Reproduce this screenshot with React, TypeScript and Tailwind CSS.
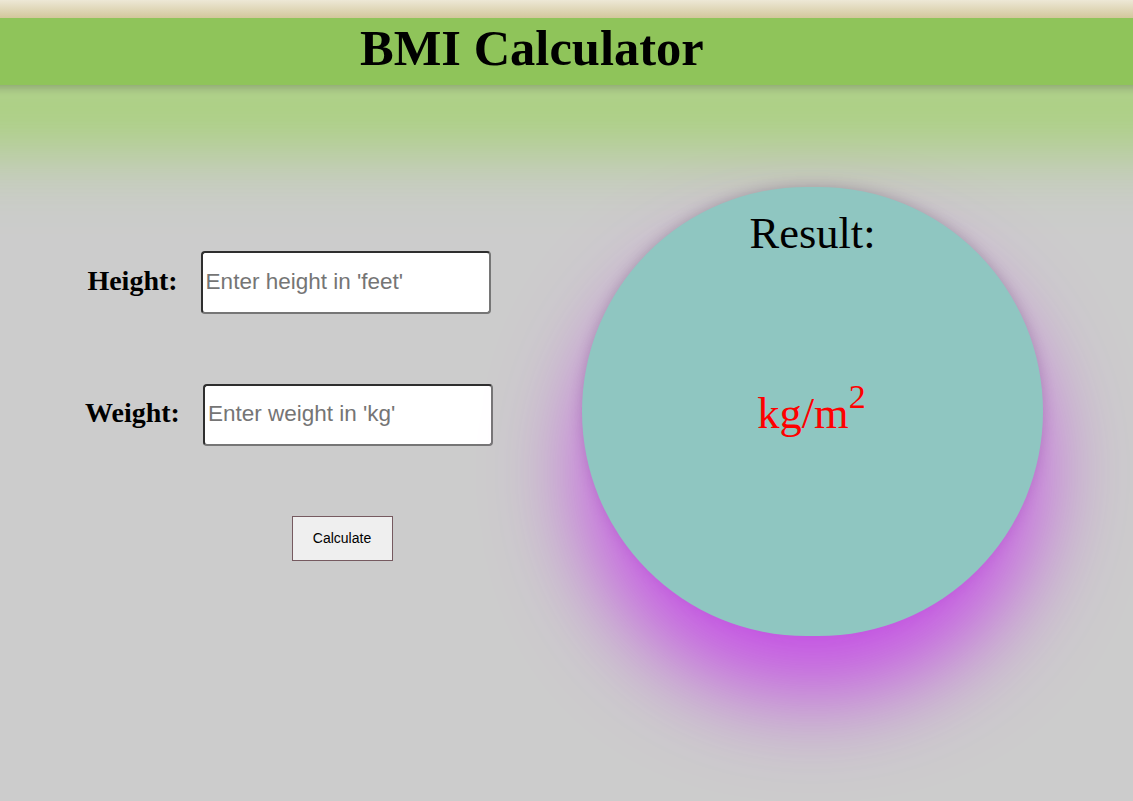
import React from "react";

export default function App() {
  return (
    <div className="w-[1133px] h-[801px] bg-[#cccccc] overflow-hidden flex flex-col" style={{ fontFamily: '"Liberation Serif", "Times New Roman", serif' }}>
      <div className="relative z-10 h-[18px] bg-gradient-to-b from-[#ede8d6] to-[#d3c79c]" />
      <header className="-mx-[150px] h-[67px] bg-[#8fc45a] shadow-[0_3px_8px_rgba(0,0,0,0.2),0_55px_75px_5px_#a2d26c]">
        <h1 className="pl-[510px] text-[50.5px] font-bold leading-[60px] text-black">BMI Calculator</h1>
      </header>
      <main className="flex">
        <section className="w-[578px] flex flex-col items-center pt-[166px]">
          <div className="flex items-center gap-[23px]">
            <label className="text-[28px] font-bold -translate-y-[2px]">Height:</label>
            <input
              type="text"
              placeholder="Enter height in 'feet'"
              className="w-[290px] h-[63px] rounded-[4px] border-2 border-[#2e2e2e] border-r-[#767676] border-b-[#767676] bg-white px-[3px] pb-[2px] text-[22.5px] text-black placeholder:text-[#757575]"
              style={{ fontFamily: '"Liberation Sans", Arial, sans-serif' }}
            />
          </div>
          <div className="flex items-center gap-[23px] mt-[70px]">
            <label className="text-[28px] font-bold -translate-y-[2px]">Weight:</label>
            <input
              type="text"
              placeholder="Enter weight in 'kg'"
              className="w-[290px] h-[62px] rounded-[4px] border-2 border-[#2e2e2e] border-r-[#767676] border-b-[#767676] bg-white px-[3px] pb-[2px] text-[22.5px] text-black placeholder:text-[#757575]"
              style={{ fontFamily: '"Liberation Sans", Arial, sans-serif' }}
            />
          </div>
          <button
            className="mt-[70px] ml-[106px] w-[101px] h-[45px] bg-[#efefef] border border-[#765a60] text-[14px] text-black"
            style={{ fontFamily: '"Liberation Sans", Arial, sans-serif' }}
          >
            Calculate
          </button>
        </section>
        <section className="pt-[102px] pl-[4px]">
          <div className="w-[461px] h-[449px] rounded-full bg-[#8fc6c1] flex flex-col items-center shadow-[0_60px_90px_#c650e6,0_0_14px_rgba(0,0,0,0.22)]">
            <div className="pt-[21px] text-[44.5px] leading-[51px] text-black">Result:</div>
            <div className="mt-[129px] pr-[2px] text-[44.5px] leading-[51px] text-[#ff0000]">
              kg/m<sup className="text-[34px] align-baseline relative -top-[20px]">2</sup>
            </div>
          </div>
        </section>
      </main>
    </div>
  );
}
